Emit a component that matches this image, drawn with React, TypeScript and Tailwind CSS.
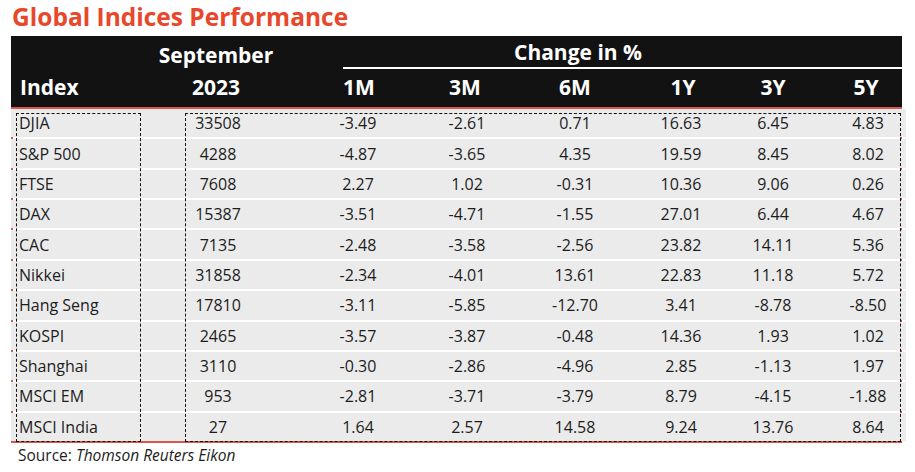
import React from "react";

const rows: [string, string, string, string, string, string, string, string][] = [
  ["DJIA", "33508", "-3.49", "-2.61", "0.71", "16.63", "6.45", "4.83"],
  ["S&P 500", "4288", "-4.87", "-3.65", "4.35", "19.59", "8.45", "8.02"],
  ["FTSE", "7608", "2.27", "1.02", "-0.31", "10.36", "9.06", "0.26"],
  ["DAX", "15387", "-3.51", "-4.71", "-1.55", "27.01", "6.44", "4.67"],
  ["CAC", "7135", "-2.48", "-3.58", "-2.56", "23.82", "14.11", "5.36"],
  ["Nikkei", "31858", "-2.34", "-4.01", "13.61", "22.83", "11.18", "5.72"],
  ["Hang Seng", "17810", "-3.11", "-5.85", "-12.70", "3.41", "-8.78", "-8.50"],
  ["KOSPI", "2465", "-3.57", "-3.87", "-0.48", "14.36", "1.93", "1.02"],
  ["Shanghai", "3110", "-0.30", "-2.86", "-4.96", "2.85", "-1.13", "1.97"],
  ["MSCI EM", "953", "-2.81", "-3.71", "-3.79", "8.79", "-4.15", "-1.88"],
  ["MSCI India", "27", "1.64", "2.57", "14.58", "9.24", "13.76", "8.64"],
];

const cols = "grid grid-cols-[139px_132px_148px_70px_146px_66px_118px_72px]";

export default function App() {
  return (
    <div className="w-[915px] h-[472px] bg-white overflow-hidden" style={{ fontFamily: '"Open Sans", sans-serif' }}>
      <div className="pl-[11px] w-[902px]">
        <div className="h-[36px] flex items-center pl-[1px]">
          <span className="text-[24.5px] font-bold text-[#e8472b] leading-none -mt-[2px]">Global Indices Performance</span>
        </div>
        <div className="bg-[#121212] text-white font-bold text-[21px] leading-none">
          <div className={`${cols} h-[31px] items-center`}>
            <div />
            <div className="text-center pt-[8px]">September</div>
            <div className="col-span-6 text-center pr-[28px] pt-[2px]">Change in %</div>
          </div>
          <div className="ml-[332px] h-[2px] bg-white" />
          <div className={`${cols} h-[38px] items-center`}>
            <div className="pl-[9px] -mt-[2px]">Index</div>
            <div className="text-center -mt-[2px]">2023</div>
            <div className="text-center pl-[6px] -mt-[2px]">1M</div>
            <div className="text-center -mt-[2px]">3M</div>
            <div className="text-center pl-[4px] -mt-[2px]">6M</div>
            <div className="text-center pl-[8px] -mt-[2px]">1Y</div>
            <div className="text-center pl-[4px] -mt-[2px]">3Y</div>
            <div className="text-center -mt-[2px]">5Y</div>
          </div>
        </div>
        <div className="relative border-2 border-[#d6594e] h-[336px] bg-white">
          <div className="grid grid-rows-11 gap-[2px] h-full">
            {rows.map((r) => (
              <div key={r[0]} className={`${cols} bg-[#ebebeb] items-center text-[16px] text-[#1c1c1c] leading-none -mx-[2px] px-[2px]`}>
                <div className="pl-[6px]">{r[0]}</div>
                {r.slice(1).map((v, i) => (
                  <div key={i} className="text-center">{v}</div>
                ))}
              </div>
            ))}
          </div>
          <div className="absolute left-[3px] top-[4px] w-[125px] bottom-[-1px] border border-dashed border-[#111]" />
          <div className="absolute left-[172px] top-[4px] right-[-1px] bottom-[-1px] border border-dashed border-[#111]" />
        </div>
        <div className="pl-[7px] pt-[5px] text-[15.5px] text-[#1c1c1c] leading-none">
          Source: <span className="italic">Thomson Reuters Eikon</span>
        </div>
      </div>
    </div>
  );
}
